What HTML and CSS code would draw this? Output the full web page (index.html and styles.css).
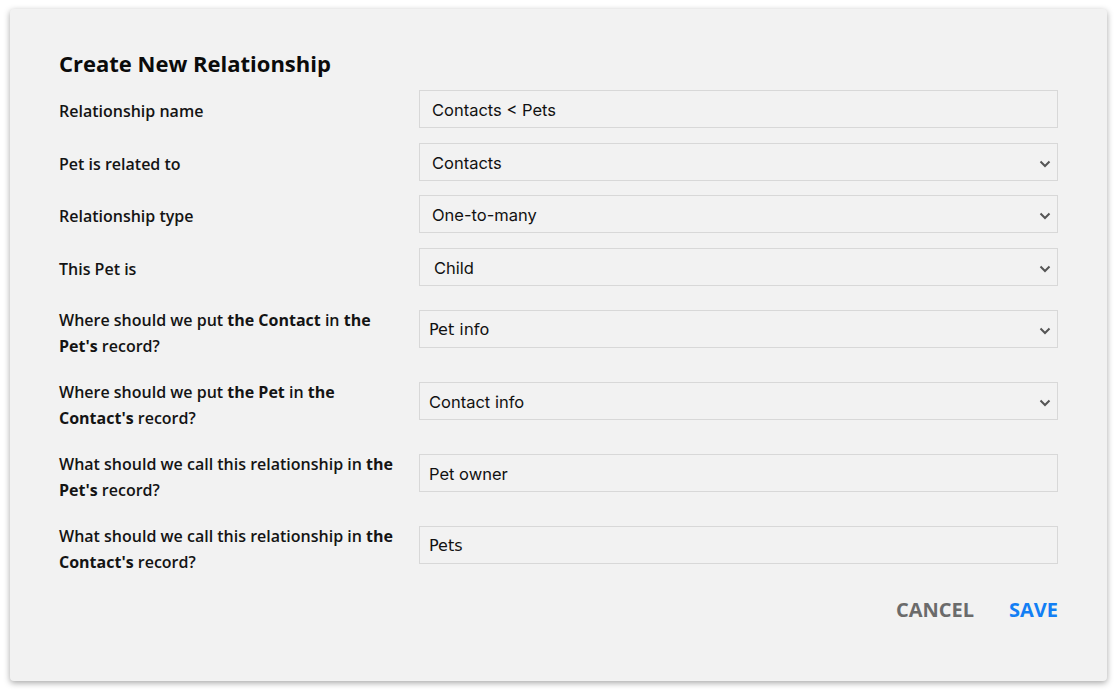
FILE: index.html
```html
<!DOCTYPE html>
<html>
<head>
<meta charset="utf-8">
<link rel="stylesheet" href="styles.css">
</head>
<body>
<div class="card">
  <h1 class="title">Create New Relationship</h1>
  <div class="form">
    <div class="row">
      <div class="label">Relationship name</div>
      <div class="field"><span class="val">Contacts &lt; Pets</span></div>
    </div>
    <div class="row">
      <div class="label">Pet is related to</div>
      <div class="field select"><span class="val">Contacts</span><svg class="chev" viewBox="0 0 12 8"><path d="M1.5 1.5 L6 6 L10.5 1.5"/></svg></div>
    </div>
    <div class="row">
      <div class="label">Relationship type</div>
      <div class="field select"><span class="val">One-to-many</span><svg class="chev" viewBox="0 0 12 8"><path d="M1.5 1.5 L6 6 L10.5 1.5"/></svg></div>
    </div>
    <div class="row">
      <div class="label">This Pet is</div>
      <div class="field select"><span class="val shift">Child</span><svg class="chev" viewBox="0 0 12 8"><path d="M1.5 1.5 L6 6 L10.5 1.5"/></svg></div>
    </div>
    <div class="row multi first">
      <div class="label">Where should we put <b>the Contact</b> in <b>the Pet's</b> record?</div>
      <div class="field select"><span class="val dv">Pet info</span><svg class="chev" viewBox="0 0 12 8"><path d="M1.5 1.5 L6 6 L10.5 1.5"/></svg></div>
    </div>
    <div class="row multi">
      <div class="label">Where should we put <b>the Pet</b> in <b>the</b> <b>Contact's</b> record?</div>
      <div class="field select"><span class="val left">Contact info</span><svg class="chev" viewBox="0 0 12 8"><path d="M1.5 1.5 L6 6 L10.5 1.5"/></svg></div>
    </div>
    <div class="row multi">
      <div class="label">What should we call this relationship in <b>the</b> <b>Pet's</b> record?</div>
      <div class="field"><span class="val left">Pet owner</span></div>
    </div>
    <div class="row multi">
      <div class="label">What should we call this relationship in <b>the</b> <b>Contact's</b> record?</div>
      <div class="field"><span class="val dv">Pets</span></div>
    </div>
  </div>
  <div class="actions">
    <span class="btn cancel">CANCEL</span>
    <span class="btn save">SAVE</span>
  </div>
</div>
</body>
</html>
```
FILE: styles.css
```css
html, body {
  margin: 0;
  padding: 0;
  background: #ffffff;
}
body {
  padding: 9px 10px 11px 10px;
  font-family: "Open Sans", "Noto Sans", sans-serif;
  color: #111;
}
.card {
  width: 1097px;
  height: 672px;
  box-sizing: border-box;
  background: #f2f2f2;
  border-radius: 4px;
  box-shadow: 0 2px 6px rgba(0,0,0,0.35);
  padding: 39px 49px 0 49px;
}
.title {
  margin: 0;
  font-size: 22px;
  line-height: 30px;
  font-weight: 700;
  color: #0b0b0b;
}
.form {
  margin-top: 12px;
  display: flex;
  flex-direction: column;
}
.row {
  display: flex;
  align-items: center;
  height: 38px;
}
.row + .row {
  margin-top: 15px;
}
.row:nth-child(3) { margin-top: 14px; }
.row.multi {
  height: auto;
  align-items: flex-start;
  margin-top: 20px;
}
.row.multi.first {
  margin-top: 21px;
}
.label {
  width: 360px;
  flex: none;
  box-sizing: border-box;
  padding-right: 20px;
  font-size: 16px;
  line-height: 26px;
  font-weight: 600;
  color: #141414;
}
.row:not(.multi) .label {
  padding-top: 3px;
}
.label b {
  font-weight: 700;
}
.field {
  flex: 1;
  height: 38px;
  box-sizing: border-box;
  border: 1px solid #d8d8d8;
  background: #f2f2f2;
  display: flex;
  align-items: center;
  padding: 0 6px 0 12px;
}
.row.multi .field {
  margin-top: 3px;
}
.val {
  font-family: "Inter", "Roboto", sans-serif;
  font-size: 16.5px;
  color: #111;
  flex: 1;
  padding-top: 2px;
}
.val.shift { padding-left: 2px; }
.val.left { margin-left: -3px; }
.val.dv {
  font-family: "DejaVu Sans", "Verdana", sans-serif;
  font-size: 16px;
  margin-left: -3px;
  padding-top: 0;
}
.chev {
  width: 12px;
  height: 8px;
  flex: none;
  margin-top: 3px;
}
.chev path {
  fill: none;
  stroke: #555;
  stroke-width: 2;
}
.actions {
  display: flex;
  justify-content: flex-end;
  gap: 35px;
  margin-top: 21px;
}
.btn {
  font-size: 20px;
  font-weight: 700;
  line-height: 28px;
}
.cancel { color: #6b6b6b; }
.save { color: #137ff4; }
```
